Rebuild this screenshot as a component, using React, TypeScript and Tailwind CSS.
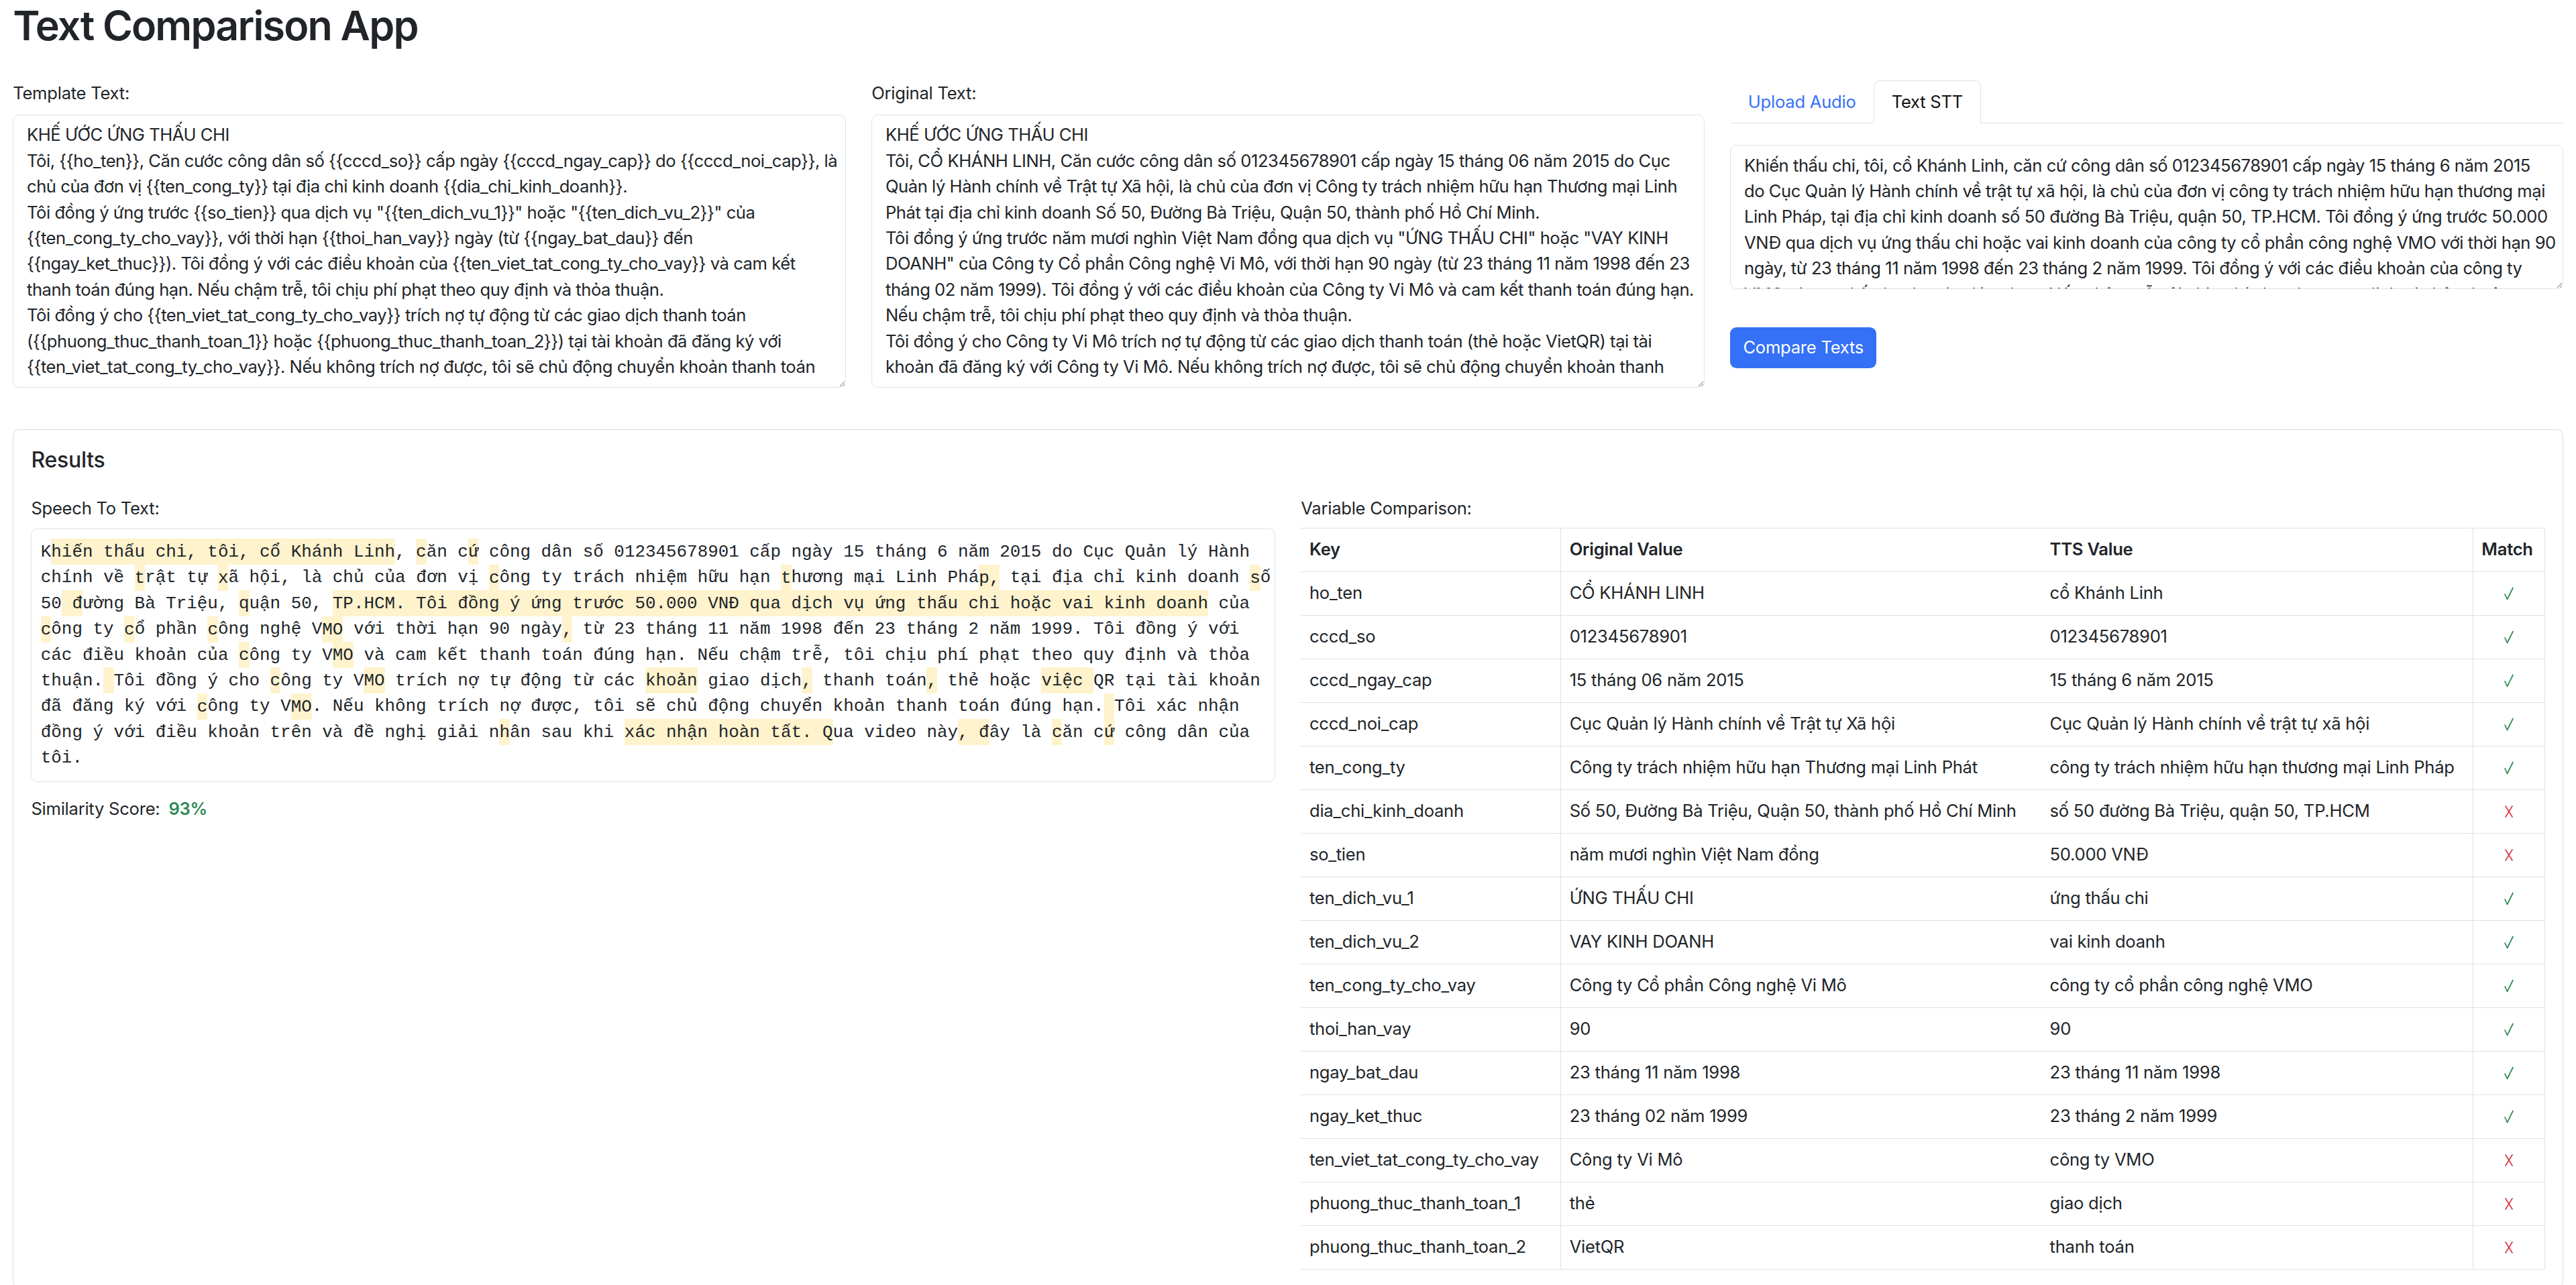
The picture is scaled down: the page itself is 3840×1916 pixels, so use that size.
import React from "react";

const templateText = [
  "KHẾ ƯỚC ỨNG THẤU CHI",
  "Tôi, {{ho_ten}}, Căn cước công dân số {{cccd_so}} cấp ngày {{cccd_ngay_cap}} do {{cccd_noi_cap}}, là",
  "chủ của đơn vị {{ten_cong_ty}} tại địa chỉ kinh doanh {{dia_chi_kinh_doanh}}.",
  'Tôi đồng ý ứng trước {{so_tien}} qua dịch vụ "{{ten_dich_vu_1}}" hoặc "{{ten_dich_vu_2}}" của',
  "{{ten_cong_ty_cho_vay}}, với thời hạn {{thoi_han_vay}} ngày (từ {{ngay_bat_dau}} đến",
  "{{ngay_ket_thuc}}). Tôi đồng ý với các điều khoản của {{ten_viet_tat_cong_ty_cho_vay}} và cam kết",
  "thanh toán đúng hạn. Nếu chậm trễ, tôi chịu phí phạt theo quy định và thỏa thuận.",
  "Tôi đồng ý cho {{ten_viet_tat_cong_ty_cho_vay}} trích nợ tự động từ các giao dịch thanh toán",
  "({{phuong_thuc_thanh_toan_1}} hoặc {{phuong_thuc_thanh_toan_2}}) tại tài khoản đã đăng ký với",
  "{{ten_viet_tat_cong_ty_cho_vay}}. Nếu không trích nợ được, tôi sẽ chủ động chuyển khoản thanh toán",
].join("\n");

const originalText = [
  "KHẾ ƯỚC ỨNG THẤU CHI",
  "Tôi, CỔ KHÁNH LINH, Căn cước công dân số 012345678901 cấp ngày 15 tháng 06 năm 2015 do Cục",
  "Quản lý Hành chính về Trật tự Xã hội, là chủ của đơn vị Công ty trách nhiệm hữu hạn Thương mại Linh",
  "Phát tại địa chỉ kinh doanh Số 50, Đường Bà Triệu, Quận 50, thành phố Hồ Chí Minh.",
  'Tôi đồng ý ứng trước năm mươi nghìn Việt Nam đồng qua dịch vụ "ỨNG THẤU CHI" hoặc "VAY KINH',
  'DOANH" của Công ty Cổ phần Công nghệ Vi Mô, với thời hạn 90 ngày (từ 23 tháng 11 năm 1998 đến 23',
  "tháng 02 năm 1999). Tôi đồng ý với các điều khoản của Công ty Vi Mô và cam kết thanh toán đúng hạn.",
  "Nếu chậm trễ, tôi chịu phí phạt theo quy định và thỏa thuận.",
  "Tôi đồng ý cho Công ty Vi Mô trích nợ tự động từ các giao dịch thanh toán (thẻ hoặc VietQR) tại tài",
  "khoản đã đăng ký với Công ty Vi Mô. Nếu không trích nợ được, tôi sẽ chủ động chuyển khoản thanh",
].join("\n");

const sttText = [
  "Khiến thấu chi, tôi, cổ Khánh Linh, căn cứ công dân số 012345678901 cấp ngày 15 tháng 6 năm 2015",
  "do Cục Quản lý Hành chính về trật tự xã hội, là chủ của đơn vị công ty trách nhiệm hữu hạn thương mại",
  "Linh Pháp, tại địa chỉ kinh doanh số 50 đường Bà Triệu, quận 50, TP.HCM. Tôi đồng ý ứng trước 50.000",
  "VNĐ qua dịch vụ ứng thấu chi hoặc vai kinh doanh của công ty cổ phần công nghệ VMO với thời hạn 90",
  "ngày, từ 23 tháng 11 năm 1998 đến 23 tháng 2 năm 1999. Tôi đồng ý với các điều khoản của công ty",
  "VMO và cam kết thanh toán đúng hạn. Nếu chậm trễ, tôi chịu phí phạt theo quy định và thỏa thuận.",
  "Tôi đồng ý cho công ty VMO trích nợ tự động từ các khoản giao dịch, thanh toán, thẻ hoặc việc QR",
].join("\n");

// [..] marks the parts that differ from the original
const diffLines = [
  "K[hiến thấu chi, tôi, cổ Khánh Linh], [c]ăn c[ứ] công dân số 012345678901 cấp ngày 15 tháng 6 năm 2015 do Cục Quản lý Hành",
  "chính về [t]rật tự [x]ã hội, là chủ của đơn vị [c]ông ty trách nhiệm hữu hạn [t]hương mại Linh Phá[p,] tại địa chỉ kinh doanh [s]ố",
  "50[ đ]ường Bà Triệu, [q]uận 50, [TP.HCM. Tôi đồng ý ứng trước 50.000 VNĐ qua dịch vụ ứng thấu chi hoặc vai kinh doanh] của",
  "[c]ông ty [c]ổ phần [c]ông nghệ V[MO] với thời hạn 90 ngày[,] từ 23 tháng 11 năm 1998 đến 23 tháng 2 năm 1999. Tôi đồng ý với",
  "các điều khoản của [c]ông ty V[MO] và cam kết thanh toán đúng hạn. Nếu chậm trễ, tôi chịu phí phạt theo quy định và thỏa",
  "thuận.[ ]Tôi đồng ý cho [c]ông ty V[MO] trích nợ tự động từ các [khoản] giao dịch[,] thanh toán[,] thẻ hoặc [việc ]QR tại tài khoản",
  "đã đăng ký với [c]ông ty V[MO]. Nếu không trích nợ được, tôi sẽ chủ động chuyển khoản thanh toán đúng hạn.[ ]Tôi xác nhận",
  "đồng ý với điều khoản trên và đề nghị giải n[h]ân sau khi [xác nhận hoàn tất. Q]ua video này[, đ]ây là [c]ăn c[ứ] công dân của",
  "tôi.",
];

const rows: [string, string, string, boolean][] = [
  ["ho_ten", "CỔ KHÁNH LINH", "cổ Khánh Linh", true],
  ["cccd_so", "012345678901", "012345678901", true],
  ["cccd_ngay_cap", "15 tháng 06 năm 2015", "15 tháng 6 năm 2015", true],
  ["cccd_noi_cap", "Cục Quản lý Hành chính về Trật tự Xã hội", "Cục Quản lý Hành chính về trật tự xã hội", true],
  ["ten_cong_ty", "Công ty trách nhiệm hữu hạn Thương mại Linh Phát", "công ty trách nhiệm hữu hạn thương mại Linh Pháp", true],
  ["dia_chi_kinh_doanh", "Số 50, Đường Bà Triệu, Quận 50, thành phố Hồ Chí Minh", "số 50 đường Bà Triệu, quận 50, TP.HCM", false],
  ["so_tien", "năm mươi nghìn Việt Nam đồng", "50.000 VNĐ", false],
  ["ten_dich_vu_1", "ỨNG THẤU CHI", "ứng thấu chi", true],
  ["ten_dich_vu_2", "VAY KINH DOANH", "vai kinh doanh", true],
  ["ten_cong_ty_cho_vay", "Công ty Cổ phần Công nghệ Vi Mô", "công ty cổ phần công nghệ VMO", true],
  ["thoi_han_vay", "90", "90", true],
  ["ngay_bat_dau", "23 tháng 11 năm 1998", "23 tháng 11 năm 1998", true],
  ["ngay_ket_thuc", "23 tháng 02 năm 1999", "23 tháng 2 năm 1999", true],
  ["ten_viet_tat_cong_ty_cho_vay", "Công ty Vi Mô", "công ty VMO", false],
  ["phuong_thuc_thanh_toan_1", "thẻ", "giao dịch", false],
  ["phuong_thuc_thanh_toan_2", "VietQR", "thanh toán", false],
];

function parse(line: string) {
  const parts: { t: string; h: boolean }[] = [];
  const re = /\[([^\]]*)\]|([^[]+)/g;
  let m: RegExpExecArray | null;
  while ((m = re.exec(line))) {
    if (m[1] !== undefined) parts.push({ t: m[1], h: true });
    else parts.push({ t: m[2], h: false });
  }
  return parts;
}

function Check() {
  return (
    <svg width="16" height="20" viewBox="0 0 16 20" className="mx-auto block">
      <path d="M2 11 L5.5 18.5 L14 1.5" fill="none" stroke="#2e8a55" strokeWidth="1.7" strokeLinecap="round" strokeLinejoin="round" />
    </svg>
  );
}

function Cross() {
  return (
    <svg width="16" height="20" viewBox="0 0 16 20" className="mx-auto block">
      <path d="M3 2 L13 18" fill="none" stroke="#d63c46" strokeWidth="1.7" strokeLinecap="round" />
      <path d="M13 2 Q8.5 9 3 18" fill="none" stroke="#d63c46" strokeWidth="1.7" strokeLinecap="round" />
    </svg>
  );
}

const areaCls =
  "block w-full rounded-[9.6px] border border-[#dee2e6] bg-white px-[19.8px] py-[10.2px] text-[25.6px] leading-[38.4px] tracking-[-0.018em] text-[#212529] overflow-hidden resize-y outline-none [scrollbar-width:none] font-[Inter,sans-serif]";

export default function App() {
  return (
    <div className="min-h-screen bg-white px-[19.2px] font-[Inter,sans-serif] tracking-[-0.016em] text-[#212529]">
      <h1 className="text-[61px] leading-[76.8px] font-semibold tracking-[-0.03em]">Text Comparison App</h1>

      <div className="mt-[43.2px] grid grid-cols-3 gap-x-[38.4px]">
        <div>
          <label className="mb-[12.8px] block text-[25.6px] leading-[38.4px]">Template Text:</label>
          <textarea readOnly wrap="off" className={`${areaCls} h-[406.4px]`} defaultValue={templateText} />
        </div>
        <div>
          <label className="mb-[12.8px] block text-[25.6px] leading-[38.4px]">Original Text:</label>
          <textarea readOnly wrap="off" className={`${areaCls} h-[406.4px]`} defaultValue={originalText} />
        </div>
        <div>
          <div className="flex border-b border-[#dee2e6]">
            <button className="-mb-px rounded-t-[9.6px] border border-transparent px-[25.6px] py-[12px] text-[25.6px] leading-[38.4px] text-[#3571f6]">
              Upload Audio
            </button>
            <button className="-mb-px rounded-t-[9.6px] border border-[#dee2e6] border-b-white bg-white px-[25.6px] py-[12px] text-[25.6px] leading-[38.4px] text-[#111]">
              Text STT
            </button>
          </div>
          <textarea readOnly wrap="off" className={`${areaCls} mt-[32px] h-[215px]`} defaultValue={sttText} />
          <button className="mt-[57px] rounded-[9.6px] bg-[#3571f6] px-[19.2px] py-[11px] text-[25.6px] leading-[38.4px] text-white">
            Compare Texts
          </button>
        </div>
      </div>

      <div className="mt-[62px] rounded-[9.6px] border border-[#dadada] p-[26.2px]">
        <h5 className="text-[32px] leading-[38.4px] font-medium">Results</h5>

        <div className="mt-[33.4px] grid grid-cols-2 gap-x-[38.4px]">
          <div>
            <div className="text-[25.6px] leading-[38.4px]">Speech To Text:</div>
            <div className="mt-[10.6px] rounded-[9.6px] border border-[#dee2e6] bg-white px-[13.4px] py-[15.4px] font-['Liberation_Mono',monospace] text-[25.9px] leading-[38.4px] tracking-normal text-[#212529]">
              {diffLines.map((line, i) => (
                <div key={i} className="whitespace-pre">
                  {parse(line).map((p, j) =>
                    p.h ? (
                      <span key={j} className="bg-[#fff3cd] py-[4.5px]">
                        {p.t}
                      </span>
                    ) : (
                      <span key={j}>{p.t}</span>
                    )
                  )}
                </div>
              ))}
            </div>
            <div className="mt-[21px] text-[25.6px] leading-[38.4px]">
              Similarity Score:<span className="ml-[13px] font-semibold text-[#2e8a55]">93%</span>
            </div>
          </div>

          <div>
            <div className="text-[25.6px] leading-[38.4px]">Variable Comparison:</div>
            <table className="mt-[9.6px] w-full table-fixed border-collapse text-[25.6px] leading-[38.4px]">
              <colgroup>
                <col className="w-[387px]" />
                <col className="w-[716px]" />
                <col className="w-[643px]" />
                <col className="w-[107px]" />
              </colgroup>
              <thead>
                <tr className="border-y border-[#dee2e6]">
                  <th className="px-[12.8px] py-[12.8px] text-left font-semibold">Key</th>
                  <th className="border-l border-[#dee2e6] px-[12.8px] py-[12.8px] text-left font-semibold">Original Value</th>
                  <th className="px-[12.8px] py-[12.8px] text-left font-semibold">TTS Value</th>
                  <th className="border-x border-[#dee2e6] px-[12.8px] py-[12.8px] text-left font-semibold">Match</th>
                </tr>
              </thead>
              <tbody>
                {rows.map(([key, orig, tts, ok]) => (
                  <tr key={key} className="border-b border-[#dee2e6]">
                    <td className="whitespace-nowrap px-[12.8px] py-[12.8px]">{key}</td>
                    <td className="border-l border-[#dee2e6] whitespace-nowrap px-[12.8px] py-[12.8px]">{orig}</td>
                    <td className="whitespace-nowrap px-[12.8px] py-[12.8px]">{tts}</td>
                    <td className="border-x border-[#dee2e6] px-[12.8px] py-[12.8px] align-middle">
                      {ok ? <Check /> : <Cross />}
                    </td>
                  </tr>
                ))}
              </tbody>
            </table>
          </div>
        </div>
      </div>
    </div>
  );
}
